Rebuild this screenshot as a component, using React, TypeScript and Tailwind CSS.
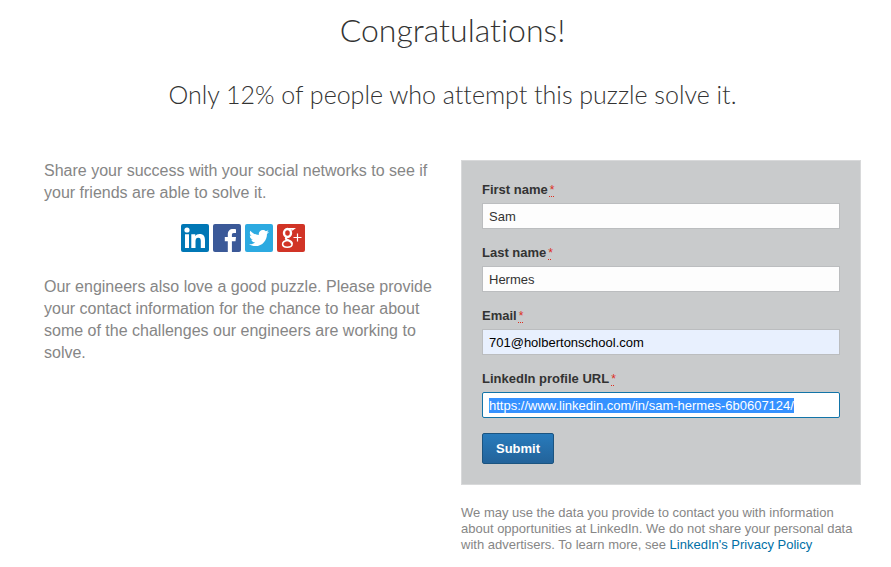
import { useEffect, useRef } from "react";
import { FaTwitter } from "react-icons/fa";

const fieldBase =
  "block h-[26px] w-full border px-[6px] text-[13px] leading-[15px] outline-none";

function Field({
  id,
  label,
  type = "text",
  value,
  tone,
  selected = false,
}: {
  id: string;
  label: string;
  type?: string;
  value: string;
  tone: string;
  selected?: boolean;
}) {
  const ref = useRef<HTMLInputElement>(null);
  useEffect(() => {
    if (selected) {
      ref.current?.focus();
      ref.current?.select();
    }
  }, [selected]);
  return (
    <div>
      <label htmlFor={id} className="mb-[5px] block text-[13px] leading-4 font-bold text-[#333]">
        {label}
        <abbr
          title="required"
          className="ml-[2px] text-xs font-normal text-[#dd2e1f] underline decoration-[#dd2e1f] decoration-dotted underline-offset-2"
        >
          *
        </abbr>
      </label>
      <input
        ref={ref}
        id={id}
        type={type}
        defaultValue={value}
        className={`${fieldBase} ${tone} selection:bg-[#3390ff]/99 selection:text-white`}
      />
    </div>
  );
}

function LinkedInMark() {
  return (
    <svg viewBox="0 0 28 28" className="size-7" aria-hidden="true">
      <g fill="#fff">
        <circle cx="6" cy="6" r="2.600" />
        <path d="M4 10.300h4V24H4zM10.300 10.300h4v1.900c.8-1.400 2.200-2.200 4.100-2.200 4.500 0 5.600 2.700 5.600 6.400V24h-4.200v-6.700c0-1.800-.3-3.500-2.500-3.500s-2.800 1.600-2.800 3.500V24h-4.200z" />
      </g>
    </svg>
  );
}

function FacebookMark() {
  return (
    <svg viewBox="0 0 28 28" className="size-7" aria-hidden="true">
      <path
        fill="#fff"
        d="M14.800 28V17.200h-3v-4.100h3v-2.700c0-3.500 2-5.400 5.100-5.400 1.500 0 2.700.1 3.100.2v3.700h-2.100c-1.700 0-2 .8-2 2v2.200h4.100l-.5 4.100h-3.600V28z"
      />
    </svg>
  );
}

function GooglePlusMark() {
  return (
    <svg viewBox="0 0 28 28" className="size-7" aria-hidden="true">
      <g fill="none" stroke="#fff">
        <ellipse cx="10.500" cy="9" rx="3.500" ry="4" strokeWidth="2.400" />
        <path d="M10.500 4.500h6.700l-1.700 1.300h-2.500" strokeWidth="1.200" />
        <path d="M10.500 12.700c-2.300 1.500-2.200 2.400-.2 3.200 2.400.9 4.700 1.600 4.700 4" strokeWidth="2" />
        <path
          d="M11 16.500c-3.300 0-5.400 1.400-5.400 3.500 0 2 1.900 3.200 4.600 3.200 2.900 0 4.900-1.300 4.900-3.300"
          strokeWidth="1.600"
        />
        <path d="M20.500 9.500v8M16.500 13.500h8" strokeWidth="1.200" />
      </g>
    </svg>
  );
}

const share = "flex size-7 items-center justify-center rounded-[2px]";

export default function App() {
  return (
    <main className="pr-[30px] pl-[44px] font-['Liberation_Sans',Arial,sans-serif]">
      <header className="text-center font-['Lato',sans-serif] font-light text-[#333] [font-variant-ligatures:none]">
        <h1 className="pt-[10px] text-[32px] leading-10">Congratulations!</h1>
        <h2 className="pt-7 text-[25px] leading-8">
          Only 12% of people who attempt this puzzle solve it.
        </h2>
      </header>
      <div className="grid grid-cols-2 gap-[17px] pt-[50px]">
        <section className="text-base leading-[22px] text-[#868686]">
          <p>Share your success with your social networks to see if your friends are able to solve it.</p>
          <nav aria-label="Share" className="flex justify-center gap-1 pt-5 pr-[2px] pb-6">
            <a href="#linkedin" aria-label="LinkedIn" className={`${share} bg-[#0077b5]`}>
              <LinkedInMark />
            </a>
            <a href="#facebook" aria-label="Facebook" className={`${share} bg-[#3b5998]`}>
              <FacebookMark />
            </a>
            <a href="#twitter" aria-label="Twitter" className={`${share} bg-[#2caae1]`}>
              <FaTwitter className="size-5 text-white" />
            </a>
            <a href="#google-plus" aria-label="Google+" className={`${share} bg-[#d13426]`}>
              <GooglePlusMark />
            </a>
          </nav>
          <p>
            Our engineers also love a good puzzle. Please provide your contact information for the
            chance to hear about some of the challenges our engineers are working to solve.
          </p>
        </section>
        <section>
          <form className="border border-[#d8d9da] bg-[#c9cbcc] px-5 pt-[21px] pb-5">
            <div className="flex flex-col gap-4">
              <Field id="first" label="First name" value="Sam" tone="border-[#bbbdbf] bg-[#fdfdfd] text-[#333]" />
              <Field id="last" label="Last name" value="Hermes" tone="border-[#bbbdbf] bg-[#fdfdfd] text-[#333]" />
              <Field id="email" label="Email" type="email" value="701@holbertonschool.com" tone="border-[#bbbdbf] bg-[#e8f0fe] text-black" />
              <Field
                id="profile"
                label="LinkedIn profile URL"
                value="https://www.linkedin.com/in/sam-hermes-6b0607124/"
                tone="rounded-[2px] border-[#1274a8] bg-white text-[#333]"
                selected
              />
            </div>
            <button
              type="button"
              className="mt-[15px] block h-[31px] w-[72px] rounded-[2px] border border-[#1b5480] bg-linear-to-b from-[#287bbc] to-[#23639a] text-[13px] font-bold text-white"
            >
              Submit
            </button>
          </form>
          <p className="pt-5 text-[13px] leading-4 text-[#868686]">
            We may use the data you provide to contact you with information about opportunities at
            LinkedIn. We do not share your personal data with advertisers. To learn more, see{" "}
            <a href="#privacy" className="inline-block text-[#006fa6]">
              LinkedIn's Privacy Policy
            </a>
          </p>
        </section>
      </div>
    </main>
  );
}
